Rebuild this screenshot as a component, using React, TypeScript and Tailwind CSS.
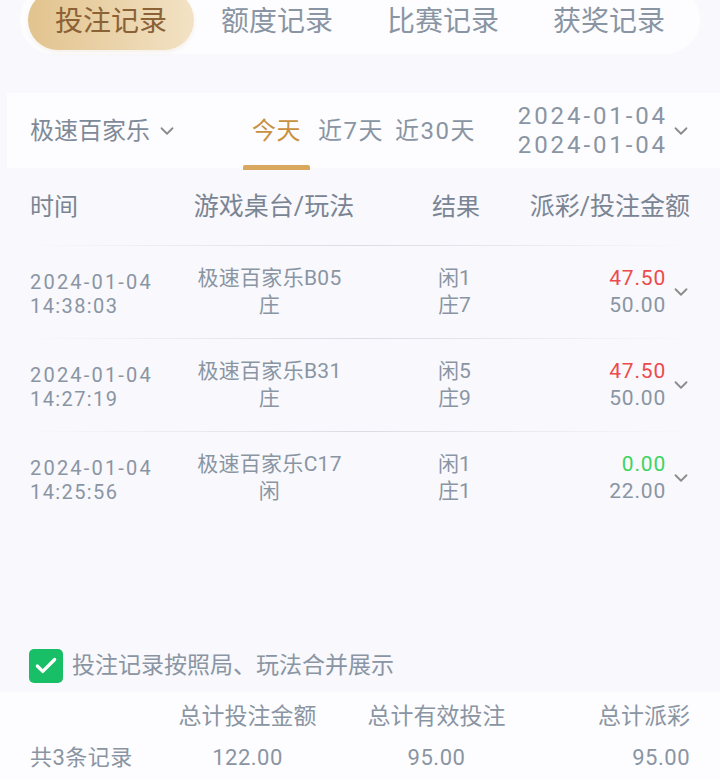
import { ChevronDown, Check } from "lucide-react";

const rows = [
  { date: "2024-01-04", time: "14:38:03", table: "极速百家乐B05", bet: "庄", r1: "闲1", r2: "庄7", payout: "47.50", amount: "50.00", win: true },
  { date: "2024-01-04", time: "14:27:19", table: "极速百家乐B31", bet: "庄", r1: "闲5", r2: "庄9", payout: "47.50", amount: "50.00", win: true },
  { date: "2024-01-04", time: "14:25:56", table: "极速百家乐C17", bet: "闲", r1: "闲1", r2: "庄1", payout: "0.00", amount: "22.00", win: false },
];

const tabs = ["投注记录", "额度记录", "比赛记录", "获奖记录"];

const Divider = () => (
  <div className="h-px mx-[20px] bg-gradient-to-r from-transparent via-[#dcdce4] to-transparent" />
);

const App = () => {
  return (
    <div
      className="w-[720px] h-[780px] overflow-hidden bg-[#f8f8fd] text-[#8a95a3] flex flex-col"
      style={{ fontFamily: 'Roboto, "Noto Sans CJK SC", sans-serif' }}
    >
      {/* top tabs */}
      <div className="mx-[20px] mt-[-14px] h-[68px] rounded-[34px] bg-[#fdfdff] grid grid-cols-4 px-[8px] pt-[4px] pb-[4px]">
        {tabs.map((t, i) => (
          <div
            key={t}
            className={`flex items-center justify-center rounded-full text-[28px] leading-none pt-[3px] ${
              i === 0
                ? "bg-gradient-to-r from-[#e2c38e] to-[#f2e2c4] text-[#8a6236] shadow-[0_2px_4px_rgba(200,160,100,0.15)]"
                : "text-[#8a95a3]"
            }`}
          >
            {t}
          </div>
        ))}
      </div>

      {/* filter row */}
      <div className="mt-[39px] ml-[7px] h-[75px] bg-[#fdfdff] flex items-center pl-[23px] pr-[28px]">
        <div className="flex items-center gap-[6px] text-[24px] text-[#7f8a98]">
          <span>极速百家乐</span>
          <ChevronDown className="w-[22px] h-[22px] text-[#8c8c8c]" strokeWidth={2} />
        </div>
        <div className="ml-[70px] flex items-center h-full text-[24px] tracking-[0.5px]">
          <div className="relative h-full flex items-center px-[4px] text-[#c9913f]">
            今天
            <div className="absolute bottom-[-2px] left-[-5px] right-[-5px] h-[5px] rounded-t-[2px] bg-[#d8a85f]" />
          </div>
          <div className="ml-[13px] text-[#8a95a3] tracking-[1.5px]">近7天</div>
          <div className="ml-[11px] text-[#8a95a3] tracking-[1.5px]">近30天</div>
        </div>
        <div className="ml-auto flex items-center">
          <div className="flex flex-col text-[24px] leading-[29px] tracking-[2.9px] text-[#8a95a3]">
            <span>2024-01-04</span>
            <span>2024-01-04</span>
          </div>
          <ChevronDown className="w-[22px] h-[22px] ml-[2px] text-[#8c8c8c]" strokeWidth={2} />
        </div>
      </div>

      {/* table header */}
      <div className="flex items-center h-[77px] px-[30px] text-[24px] text-[#7a8594] whitespace-nowrap">
        <div className="w-[150px] shrink-0">时间</div>
        <div className="w-[188px] shrink-0 text-center text-[25px]">游戏桌台/玩法</div>
        <div className="w-[160px] shrink-0 text-center pl-[16px]">结果</div>
        <div className="flex-1 text-right text-[25px]">派彩/投注金额</div>
      </div>

      {rows.map((r) => (
        <div key={r.time}>
          <Divider />
          <div className="flex items-center h-[92px] pl-[30px] pr-[28px] whitespace-nowrap">
            <div className="w-[150px] shrink-0 flex flex-col text-[20px] leading-[24px] tracking-[2.2px] text-[#8a95a3] mt-[4px]">
              <span>{r.date}</span>
              <span className="tracking-[1.4px]">{r.time}</span>
            </div>
            <div className="w-[179px] shrink-0 flex flex-col items-center text-[21px] leading-[27px] tracking-[0.3px] text-[#8a95a3]">
              <span>{r.table}</span>
              <span>{r.bet}</span>
            </div>
            <div className="ml-[79px] flex flex-col text-[21px] leading-[27px] text-[#8a95a3]">
              <span>{r.r1}</span>
              <span>{r.r2}</span>
            </div>
            <div className="ml-auto flex items-center">
              <div className="flex flex-col items-end text-[21px] leading-[27px] tracking-[0.8px]">
                <span className={r.win ? "text-[#ec4b4b]" : "text-[#3dd462]"}>{r.payout}</span>
                <span className="text-[#8a95a3]">{r.amount}</span>
              </div>
              <ChevronDown className="w-[22px] h-[22px] ml-[4px] text-[#8c8c8c]" strokeWidth={2} />
            </div>
          </div>
        </div>
      ))}

      <div className="flex-1" />

      {/* merge checkbox */}
      <div className="flex items-center gap-[9px] px-[29px] pb-[9px]">
        <div className="w-[34px] h-[34px] rounded-[5px] bg-[#18bf67] flex items-center justify-center">
          <Check className="w-[26px] h-[26px] text-white" strokeWidth={3} />
        </div>
        <span className="text-[23px] text-[#8a95a3]">投注记录按照局、玩法合并展示</span>
      </div>

      {/* totals */}
      <div className="h-[88px] bg-[#fdfdff] px-[30px] pt-[9px] text-[#8a95a3] whitespace-nowrap">
        <div className="flex items-center h-[32px] text-[23px]">
          <div className="w-[130px]" />
          <div className="w-[175px] text-center">总计投注金额</div>
          <div className="w-[203px] text-center">总计有效投注</div>
          <div className="flex-1 text-right">总计派彩</div>
        </div>
        <div className="flex items-center h-[48px] text-[22px] tracking-[0.5px]">
          <div className="w-[130px]">共3条记录</div>
          <div className="w-[175px] text-center">122.00</div>
          <div className="w-[203px] text-center">95.00</div>
          <div className="flex-1 text-right">95.00</div>
        </div>
      </div>
    </div>
  );
};

export default App;
